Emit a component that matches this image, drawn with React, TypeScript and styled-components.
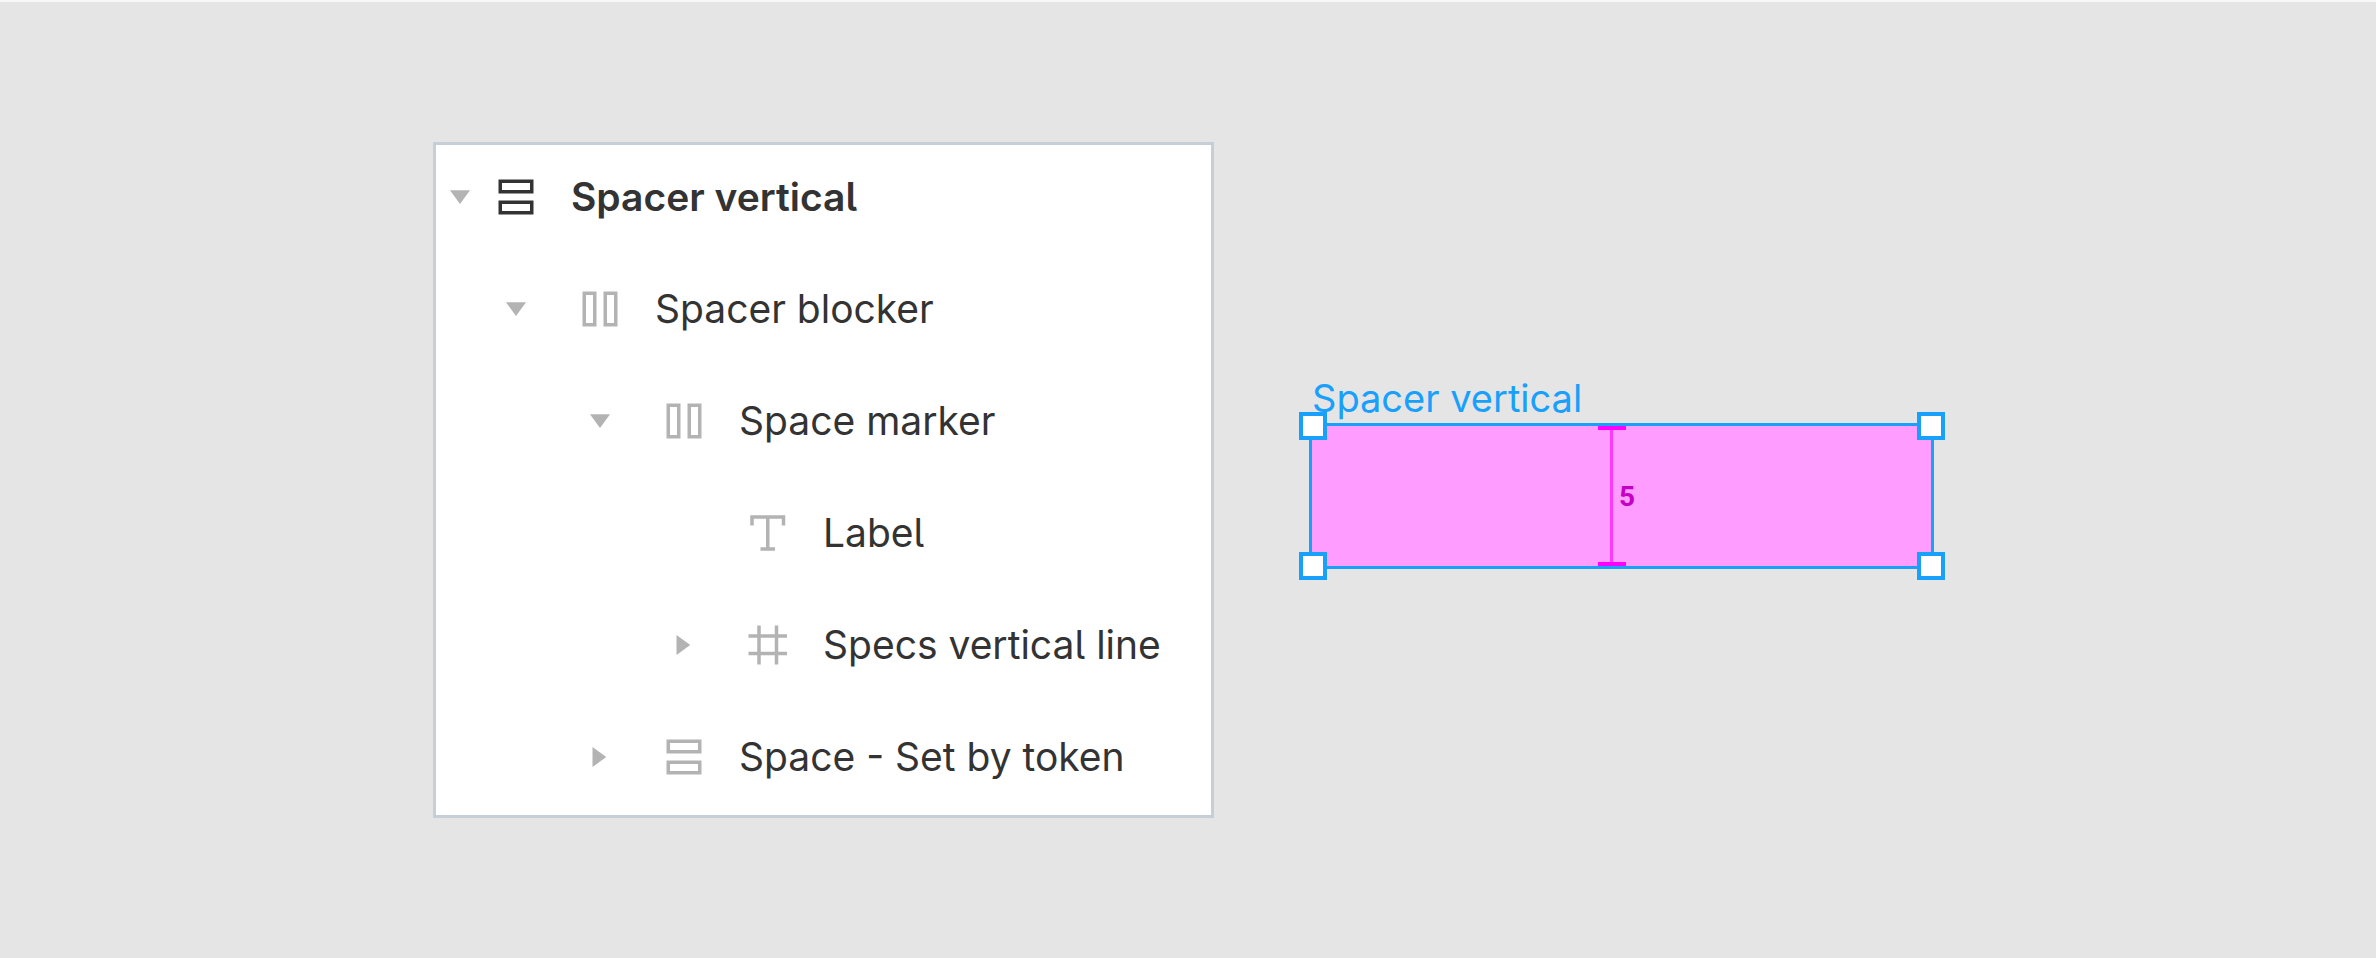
import React, { useState } from "react";
import styled, { createGlobalStyle, css } from "styled-components";

const GlobalStyle = createGlobalStyle`
  *, *::before, *::after { box-sizing: border-box; }
  body {
    margin: 0;
    background: #e5e5e5;
    font-family: Inter, "Liberation Sans", sans-serif;
  }
`;

const Canvas = styled.main`
  display: flex;
  align-items: flex-start;
  gap: 95px;
  min-height: 100vh;
  padding: 140px 442px 136px 433px;
  border-top: 2px solid #f8f8f8;
  background: #e5e5e5;
`;

const LayersPanel = styled.ul`
  flex: 1 1 781px;
  display: flex;
  flex-direction: column;
  gap: 8px;
  margin: 0;
  padding: 0 0 6px;
  list-style: none;
  background: #fff;
  border: 3px solid #c5cfd8;
`;

const LayerRow = styled.li<{ $depth: number; $strong?: boolean }>`
  display: flex;
  align-items: center;
  height: 104px;
  padding-left: ${({ $depth }) => ($depth === 0 ? 14 : 84 * $depth - 14)}px;
  color: ${({ $strong }) => ($strong ? "#333" : "#b3b3b3")};
  font-weight: ${({ $strong }) => ($strong ? 600 : 400)};
`;

const toggleSlot = css<{ $depth: number }>`
  flex: none;
  width: 20px;
  height: 20px;
  margin-right: ${({ $depth }) => ($depth === 0 ? 26 : 54)}px;
`;

const Toggle = styled.button<{ $depth: number }>`
  ${toggleSlot}
  display: block;
  padding: 0;
  border: 0;
  background: none;
  color: #b3b3b3;
  cursor: pointer;
`;

const ToggleSpace = styled.span<{ $depth: number }>`
  ${toggleSlot}
`;

const Glyph = styled.svg`
  display: block;
  flex: none;
`;

const LayerName = styled.span`
  margin-left: 35px;
  color: #333;
  font-size: 39px;
  line-height: 48px;
  white-space: nowrap;
`;

const TailedL = styled.span`
  font-feature-settings: "cv05" 1;
`;

const Preview = styled.section`
  flex: 1 1 625px;
  display: flex;
  flex-direction: column;
  gap: 2px;
  padding-top: 233px;
`;

const FrameTitle = styled.h2`
  margin: 0;
  padding-left: 3px;
  color: #18a0fb;
  font-size: 38px;
  font-weight: 400;
  line-height: 46px;
`;

const Frame = styled.div`
  position: relative;
  display: flex;
  justify-content: center;
  height: 146px;
  border: 3px solid #18a0fb;
  background: #ff9cff;
`;

const Handle = styled.span<{ $x: "left" | "right"; $y: "top" | "bottom" }>`
  position: absolute;
  ${({ $x }) => $x}: ${({ $x }) => ($x === "left" ? -13 : -14)}px;
  ${({ $y }) => $y}: -14px;
  width: 28px;
  height: 28px;
  border: 4px solid #18a0fb;
  background: #fff;
`;

const Marker = styled.div`
  display: flex;
  align-items: center;
  margin-right: 10px;
`;

const Measure = styled.span`
  display: flex;
  flex-direction: column;
  align-items: center;
  align-self: stretch;
  width: 28px;
`;

const MeasureCap = styled.span`
  width: 28px;
  height: 4px;
  background: #f0f;
`;

const MeasureLine = styled.span`
  flex: 1;
  width: 3px;
  background: #ff38ff;
`;

const SpaceValue = styled.span`
  margin-left: -7px;
  padding-top: 2px;
  color: #c400c4;
  font-family: Roboto, sans-serif;
  font-size: 28px;
  font-weight: 700;
  line-height: 32px;
`;

type Kind = "rows" | "columns" | "text" | "frame";

interface Layer {
  name: string;
  depth: number;
  kind: Kind;
  state?: "open" | "closed";
  strong?: boolean;
}

const layers: Layer[] = [
  { name: "Spacer vertical", depth: 0, kind: "rows", state: "open", strong: true },
  { name: "Spacer blocker", depth: 1, kind: "columns", state: "open" },
  { name: "Space marker", depth: 2, kind: "columns", state: "open" },
  { name: "Label", depth: 3, kind: "text" },
  { name: "Specs vertical line", depth: 3, kind: "frame", state: "closed" },
  { name: "Space - Set by token", depth: 2, kind: "rows", state: "closed" },
];

const shapes: Record<Kind, React.ReactNode> = {
  rows: (
    <>
      <rect x="4.25" y="4.25" width="31.5" height="10.5" />
      <rect x="4.25" y="25.25" width="31.5" height="10.5" />
    </>
  ),
  columns: (
    <>
      <rect x="4.25" y="4.25" width="10.5" height="31.5" />
      <rect x="25.25" y="4.25" width="10.5" height="31.5" />
    </>
  ),
  text: <path d="M4 12.5V4H35.5V12.5M19.75 4V36M12.5 36H27" />,
  frame: <path d="M11 0.5V39.5M28.5 0.5V39.5M0.5 11H39M0.5 28.5H39" />,
};

function LayerIcon({ kind }: { kind: Kind }) {
  return (
    <Glyph width="40" height="40" viewBox="0 0 40 40" fill="none" stroke="currentColor" strokeWidth="3.5" aria-hidden="true">
      {shapes[kind]}
    </Glyph>
  );
}

function Caret({ open }: { open: boolean }) {
  return (
    <Glyph width="20" height="20" viewBox="0 0 20 20" fill="currentColor" aria-hidden="true">
      <path d={open ? "M0 3.25H20L10 17Z" : "M2.5 0V20L16.25 10Z"} />
    </Glyph>
  );
}

/* The layer list sets a word-final "l" with a tail. */
function Name({ text }: { text: string }) {
  return (
    <LayerName>
      {text.split(/(l\b)/).map((part, i) => (part === "l" ? <TailedL key={i}>l</TailedL> : part))}
    </LayerName>
  );
}

export default function App() {
  const [open, setOpen] = useState(() => layers.map((layer) => layer.state === "open"));
  const toggle = (index: number) => setOpen((prev) => prev.map((value, i) => (i === index ? !value : value)));

  return (
    <>
      <GlobalStyle />
      <Canvas>
        <LayersPanel aria-label="Layers">
          {layers.map(({ name, depth, kind, state, strong }, i) => (
            <LayerRow key={name} $depth={depth} $strong={strong}>
              {state ? (
                <Toggle type="button" $depth={depth} aria-label={name} aria-expanded={open[i]} onClick={() => toggle(i)}>
                  <Caret open={open[i]} />
                </Toggle>
              ) : (
                <ToggleSpace $depth={depth} />
              )}
              <LayerIcon kind={kind} />
              <Name text={name} />
            </LayerRow>
          ))}
        </LayersPanel>
        <Preview>
          <FrameTitle>Spacer vertical</FrameTitle>
          <Frame>
            <Marker>
              <Measure>
                <MeasureCap />
                <MeasureLine />
                <MeasureCap />
              </Measure>
              <SpaceValue>5</SpaceValue>
            </Marker>
            <Handle $x="left" $y="top" />
            <Handle $x="right" $y="top" />
            <Handle $x="left" $y="bottom" />
            <Handle $x="right" $y="bottom" />
          </Frame>
        </Preview>
      </Canvas>
    </>
  );
}
